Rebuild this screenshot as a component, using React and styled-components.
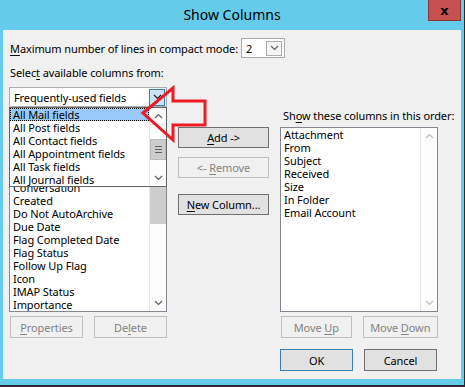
import React from 'react'
import styled, { createGlobalStyle } from 'styled-components'

const GlobalStyle = createGlobalStyle`
	html, body { margin: 0; padding: 0; }
	body {
		width: 465px;
		height: 387px;
		overflow: hidden;
		background: #2b2b2b;
		font-family: 'Noto Sans', 'Open Sans', sans-serif;
	}
`

const Window = styled.div`
	width: 464px;
	height: 385px;
	box-sizing: border-box;
	padding: 0 3px 6px 3px;
	background: #65cbea;
	display: flex;
	flex-direction: column;
`
const TitleBar = styled.div`
	height: 30px;
	display: grid;
	grid-template-columns: 1fr auto 1fr;
`
const Title = styled.div`
	grid-column: 2;
	font-size: 14px;
	line-height: 30px;
	color: #000;
`
const CloseButton = styled.div`
	grid-column: 3;
	justify-self: end;
	width: 31px;
	height: 20px;
	background: #c75050;
	border: 1px solid #8a3535;
	border-top: none;
	display: flex;
	align-items: center;
	justify-content: center;
	font-family: 'DejaVu Sans', sans-serif;
	font-weight: bold;
	font-size: 13px;
	line-height: 1;
	color: #000;
`
const Client = styled.div`
	flex: 1;
	background: #f0f0f0;
	padding: 8px 0 0 6px;
	font-size: 11px;
	letter-spacing: -0.1px;
	color: #000;
`
const TopRow = styled.div`
	display: flex;
	align-items: center;
	gap: 3px;
	padding-left: 1px;
	height: 20px;
`
const Key = styled.span`
	text-decoration: underline;
	text-underline-offset: 2px;
`
const SpinBox = styled.div`
	width: 36px;
	height: 18px;
	border: 1px solid #acacac;
	background: #fff;
	display: flex;
	align-items: center;
	justify-content: space-between;
	padding: 0 2px 0 4px;
	box-sizing: content-box;
`
const SmallDrop = styled.div`
	width: 14px;
	height: 13px;
	border: 1px solid #adadad;
	background: #f5f5f5;
	display: flex;
	align-items: center;
	justify-content: center;
`
const Columns = styled.div`
	margin-top: 8px;
	display: grid;
	grid-template-columns: 158px 91px 158px;
	column-gap: 11px;
	position: relative;
`
const Column = styled.div`
	display: flex;
	flex-direction: column;
	position: relative;
	padding-top: ${(p) => p.top || 0}px;
`
const Label = styled.div`
	height: 14px;
	line-height: 14px;
	margin-bottom: ${(p) => p.gap}px;
	white-space: nowrap;
	padding-left: ${(p) => p.indent || 1}px;
`
const Combo = styled.div`
	height: 18px;
	border: 1px solid #abadb3;
	background: #fff;
	display: flex;
	align-items: center;
	justify-content: space-between;
	padding-left: 4px;
`
const ComboButton = styled.div`
	width: 14px;
	height: 15px;
	margin-right: 1px;
	background: #cce4f7;
	border: 1px solid #3c7fb1;
	display: flex;
	align-items: center;
	justify-content: center;
`
const ListBox = styled.div`
	height: ${(p) => p.h}px;
	box-sizing: border-box;
	border: 1px solid #828790;
	background: #fff;
	display: flex;
	overflow: hidden;
`
const Items = styled.div`
	flex: 1;
	overflow: hidden;
	padding-top: ${(p) => p.offset || 0}px;
`
const Item = styled.div`
	height: 13px;
	line-height: 13px;
	padding-left: 3px;
	white-space: nowrap;
	background: ${(p) => (p.selected ? '#99c9f7' : 'transparent')};
	outline: ${(p) => (p.selected ? '1px dotted #000' : 'none')};
	outline-offset: -1px;
`
const ScrollBar = styled.div`
	width: 16px;
	border-left: 1px solid #e6e6e6;
	background: #fcfcfc;
	display: flex;
	flex-direction: column;
`
const ScrollArrow = styled.div`
	height: 16px;
	display: flex;
	align-items: center;
	justify-content: center;
	border-bottom: ${(p) => (p.sep ? '1px solid #e0e0e0' : 'none')};
`
const Track = styled.div`
	flex: 1;
	display: flex;
	flex-direction: column;
	padding-top: ${(p) => p.thumbTop}px;
`
const Thumb = styled.div`
	height: ${(p) => p.h}px;
	background: #cdcdcd;
	border: 1px solid ${(p) => (p.framed ? '#bcbcbc' : '#cdcdcd')};
	box-sizing: border-box;
	display: flex;
	align-items: center;
	justify-content: center;
`
const Grip = styled.div`
	width: 7px;
	height: 5px;
	border-top: 1px solid #606060;
	border-bottom: 1px solid #606060;
	position: relative;
	&::after {
		content: '';
		position: absolute;
		left: 0;
		right: 0;
		top: 2px;
		border-top: 1px solid #606060;
	}
`
const ButtonRow = styled.div`
	display: flex;
	gap: ${(p) => p.gap}px;
	margin-top: ${(p) => p.mt}px;
	padding-left: ${(p) => p.pl || 0}px;
`
const Button = styled.div`
	width: ${(p) => p.w}px;
	height: ${(p) => p.h || 22}px;
	box-sizing: border-box;
	display: flex;
	align-items: center;
	justify-content: center;
	white-space: nowrap;
	background: ${(p) => (p.disabled ? '#f0f0f0' : '#e1e1e1')};
	border: 1px solid
		${(p) => (p.disabled ? '#bfbfbf' : p.primary ? '#3c7fb1' : '#707070')};
	color: ${(p) => (p.disabled ? '#838383' : '#000')};
	margin-bottom: ${(p) => p.mb || 0}px;
`
const Footer = styled.div`
	display: flex;
	gap: 11px;
	margin-top: 11px;
	padding-left: 271px;
`
const Popup = styled.div`
	position: absolute;
	left: 0;
	top: 41px;
	width: 158px;
	height: 80px;
	box-sizing: border-box;
	border: 1px solid #646464;
	background: #fff;
	display: flex;
`
const Pointer = styled.svg`
	position: absolute;
	left: 131px;
	top: 19px;
	overflow: visible;
`

const Chevron = ({ up, color = '#606060' }) => (
	<svg width="9" height="6" viewBox="0 0 9 6">
		<polyline
			points={up ? '1,5 4.5,1.5 8,5' : '1,1 4.5,4.5 8,1'}
			fill="none"
			stroke={color}
			strokeWidth="1.2"
		/>
	</svg>
)

const Scroll = ({ thumbTop, thumbH, grip, disabled, sep }) => {
	const color = disabled ? '#bfbfbf' : '#606060'
	return (
		<ScrollBar>
			<ScrollArrow sep={sep}>
				<Chevron up color={color} />
			</ScrollArrow>
			<Track thumbTop={thumbTop}>
				{thumbH ? (
					<Thumb h={thumbH} framed={grip}>
						{grip && <Grip />}
					</Thumb>
				) : null}
			</Track>
			<ScrollArrow>
				<Chevron color={color} />
			</ScrollArrow>
		</ScrollBar>
	)
}

const available = [
	'Bcc',
	'Categories',
	'Cc',
	'Changed By',
	'Contacts',
	'Conversation',
	'Created',
	'Do Not AutoArchive',
	'Due Date',
	'Flag Completed Date',
	'Flag Status',
	'Follow Up Flag',
	'Icon',
	'IMAP Status',
	'Importance',
]
const fieldSets = [
	'All Mail fields',
	'All Post fields',
	'All Contact fields',
	'All Appointment fields',
	'All Task fields',
	'All Journal fields',
]
const shown = [
	'Attachment',
	'From',
	'Subject',
	'Received',
	'Size',
	'In Folder',
	'Email Account',
]

const App = () => (
	<>
		<GlobalStyle />
		<Window>
			<TitleBar>
				<Title>Show Columns</Title>
				<CloseButton>x</CloseButton>
			</TitleBar>
			<Client>
				<TopRow>
					<span>
						<Key>M</Key>aximum number of lines in compact mode:
					</span>
					<SpinBox>
						<span>2</span>
						<SmallDrop>
							<Chevron />
						</SmallDrop>
					</SpinBox>
				</TopRow>

				<Columns>
					<Column>
						<Label gap={7}>
							Selec<Key>t</Key> available columns from:
						</Label>
						<Combo>
							<span>Frequently-used fields</span>
							<ComboButton>
								<Chevron color="#202020" />
							</ComboButton>
						</Combo>
						<ListBox h={205}>
							<Items offset={8}>
								{available.map((name) => (
									<Item key={name}>{name}</Item>
								))}
							</Items>
							<Scroll thumbTop={0} thumbH={100} />
						</ListBox>
						<ButtonRow gap={11} mt={4} pl={1}>
							<Button w={73} disabled>
								<span>
									<Key>P</Key>roperties
								</span>
							</Button>
							<Button w={73} disabled>
								<span>
									De<Key>l</Key>ete
								</span>
							</Button>
						</ButtonRow>

						<Popup>
							<Items>
								{fieldSets.map((name, i) => (
									<Item key={name} selected={i === 0}>
										{name}
									</Item>
								))}
							</Items>
							<Scroll thumbTop={14} thumbH={21} grip sep />
						</Popup>
					</Column>

					<Column top={61}>
						<Button w={91} h={21} mb={9}>
							<span>
								<Key>A</Key>dd -&gt;
							</span>
						</Button>
						<Button w={91} h={21} mb={16} disabled>
							<span>
								&lt;- <Key>R</Key>emove
							</span>
						</Button>
						<Button w={91} h={21}>
							<span>
								<Key>N</Key>ew Column...
							</span>
						</Button>
					</Column>

					<Column top={43}>
						<Label gap={4} indent={3}>
							Sh<Key>o</Key>w these columns in this order:
						</Label>
						<ListBox h={185}>
							<Items>
								{shown.map((name) => (
									<Item key={name}>{name}</Item>
								))}
							</Items>
							<Scroll disabled />
						</ListBox>
						<ButtonRow gap={11} mt={4} pl={1}>
							<Button w={73} disabled>
								<span>
									Move <Key>U</Key>p
								</span>
							</Button>
							<Button w={78} disabled>
								<span>
									Move <Key>D</Key>own
								</span>
							</Button>
						</ButtonRow>
					</Column>

					<Pointer width="70" height="58">
						<polygon
							points="3,28 33,3 33,16 65,16 65,40 33,40 33,55"
							fill="none"
							stroke="#ed1c24"
							strokeWidth="3"
							strokeLinejoin="miter"
						/>
					</Pointer>
				</Columns>

				<Footer>
					<Button w={73} primary>
						OK
					</Button>
					<Button w={73}>Cancel</Button>
				</Footer>
			</Client>
		</Window>
	</>
)

export default App
